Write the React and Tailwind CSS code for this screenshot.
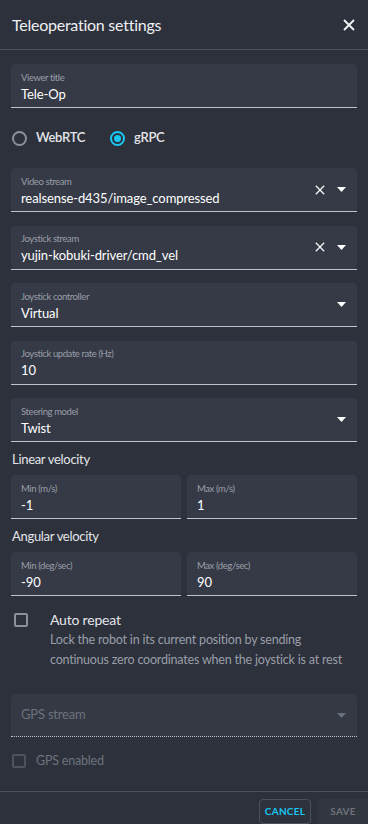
import { useState } from 'react';

function Caret({ dim }) {
  return (
    <svg width="9" height="5" viewBox="0 0 9 5" className={dim ? 'text-gray-500' : 'text-white'}>
      <path d="M0 0h9L4.5 5z" fill="currentColor" />
    </svg>
  );
}

function Cross({ size = 12, stroke = 1.8 }) {
  return (
    <svg width={size} height={size} viewBox="0 0 12 12" className="text-gray-100">
      <path d="M1 1l10 10M11 1L1 11" stroke="currentColor" strokeWidth={stroke} fill="none" />
    </svg>
  );
}

function Field({ label, value, clear, select }) {
  return (
    <div className="flex h-[44px] items-center rounded-t bg-[#353a46] border-b border-[#bfc2c8] pl-[10px] pr-[11px]">
      <div className="flex-1 min-w-0 pt-[4px]">
        <div className="text-[9.5px] leading-[12px] text-[#9a9ea8] tracking-[-0.4px]">{label}</div>
        <div className="text-[13px] leading-[20px] text-white tracking-[-0.1px]">{value}</div>
      </div>
      {clear && (
        <div className="mr-[12px] flex">
          <Cross size={10} stroke={1.6} />
        </div>
      )}
      {select && (
        <div className="flex">
          <Caret />
        </div>
      )}
    </div>
  );
}

function Radio({ label, checked, onClick }) {
  return (
    <label className="flex items-center gap-[9px] text-[13px] font-semibold tracking-[-0.3px] text-[#e4e5e8]" onClick={onClick}>
      <span className={`w-[15px] h-[15px] rounded-full border-2 flex items-center justify-center ${checked ? 'border-[#18c6f2]' : 'border-[#8d9099]'}`}>
        {checked && <span className="w-[7px] h-[7px] rounded-full bg-[#18c6f2]" />}
      </span>
      {label}
    </label>
  );
}

export default function App() {
  const [mode, setMode] = useState('grpc');

  return (
    <div className="w-[368px] h-[824px] overflow-hidden bg-[#2c313c] text-white flex flex-col" style={{ fontFamily: 'Lato, "Liberation Sans", sans-serif' }}>
      <header className="flex h-[50px] items-center justify-between border-b border-[#4b505a] pl-[12px] pr-[9px] shrink-0">
        <h1 className="text-[16px] tracking-[-0.25px] text-[#eeeff1]">Teleoperation settings</h1>
        <button className="p-1 flex">
          <Cross size={12} stroke={1.8} />
        </button>
      </header>

      <div className="flex-1 min-h-0 px-[11px] pt-[14px] flex flex-col">
        <Field label="Viewer title" value="Tele-Op" />

        <div className="flex items-center gap-[25px] h-[60px] pl-[1px]">
          <Radio label="WebRTC" checked={mode === 'webrtc'} onClick={() => setMode('webrtc')} />
          <Radio label="gRPC" checked={mode === 'grpc'} onClick={() => setMode('grpc')} />
        </div>

        <div className="flex flex-col gap-[13.5px]">
          <Field label="Video stream" value="realsense-d435/image_compressed" clear select />
          <Field label="Joystick stream" value="yujin-kobuki-driver/cmd_vel" clear select />
          <Field label="Joystick controller" value="Virtual" select />
          <Field label="Joystick update rate (Hz)" value="10" />
          <Field label="Steering model" value="Twist" select />
        </div>

        <div className="text-[13px] tracking-[-0.3px] text-[#e4e5e8] pt-[8px] pb-[7px] leading-[18px] pl-[1px]">Linear velocity</div>
        <div className="grid grid-cols-2 gap-[6px]">
          <Field label="Min (m/s)" value="-1" />
          <Field label="Max (m/s)" value="1" />
        </div>

        <div className="text-[13px] tracking-[-0.3px] text-[#e4e5e8] pt-[8px] pb-[7px] leading-[18px] pl-[1px]">Angular velocity</div>
        <div className="grid grid-cols-2 gap-[6px]">
          <Field label="Min (deg/sec)" value="-90" />
          <Field label="Max (deg/sec)" value="90" />
        </div>

        <div className="flex pt-[14px] pl-[3px]">
          <span className="mt-[3px] w-[14px] h-[14px] border-2 border-[#8d9099] rounded-[2px] shrink-0" />
          <div className="pl-[22px]">
            <div className="text-[14px] tracking-[-0.2px] text-[#e4e5e8] leading-[20px]">Auto repeat</div>
            <div className="text-[12.5px] tracking-[-0.2px] text-[#9a9ea8] leading-[20px]">
              Lock the robot in its current position by sending continuous zero coordinates when the joystick is at rest
            </div>
          </div>
        </div>

        <div className="mt-[24px] flex h-[43px] items-center rounded-t bg-[#343944] pl-[10px] pr-[11px] border-b border-dotted border-[#bfc2c8]">
          <div className="flex-1 text-[13px] tracking-[-0.2px] text-[#6e727c]">GPS stream</div>
          <Caret dim />
        </div>

        <div className="flex items-center gap-[10px] mt-[14px] h-[20px] pl-[1px]">
          <span className="w-[14px] h-[14px] border-2 border-[#4d525c] rounded-[2px]" />
          <span className="text-[12.5px] tracking-[-0.2px] text-[#6e727c]">GPS enabled</span>
        </div>
      </div>

      <footer className="h-[33px] border-t border-[#4b505a] flex items-start pt-[7px] justify-end gap-[7px] shrink-0">
        <button className="h-[25px] w-[52px] rounded border border-[#4b505a] text-[10px] font-bold tracking-wide text-[#18c6f2]">CANCEL</button>
        <button className="h-[25px] w-[50px] rounded-tl bg-[#31363f] text-[10px] font-bold tracking-wide text-[#6e727c]">SAVE</button>
      </footer>
    </div>
  );
}
